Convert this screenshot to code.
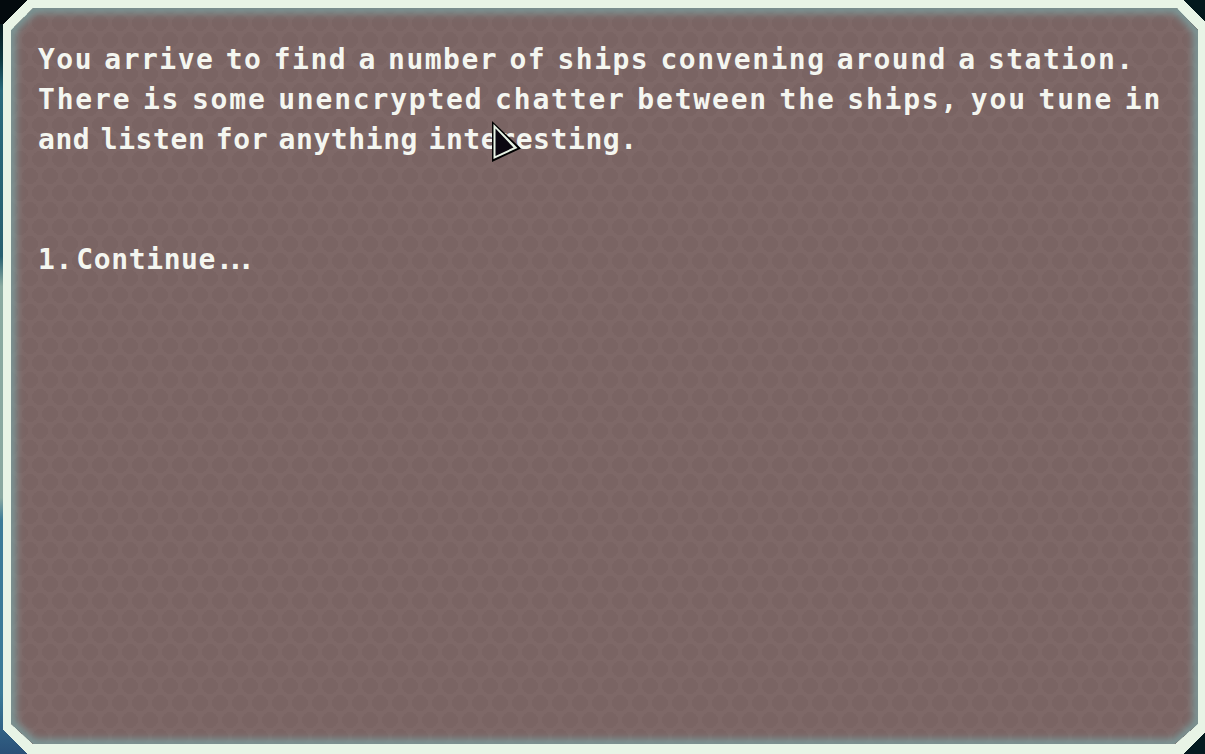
const LINES = [
  { text: 'You arrive to find a number of ships convening around a station.', tracking: 'tracking-[1.48px]' },
  { text: 'There is some unencrypted chatter between the ships, you tune in', tracking: 'tracking-[1.8px]' },
  { text: 'and listen for anything interesting.', tracking: 'tracking-[0.58px]' },
];

function PanelArt() {
  return (
    <svg className="absolute inset-0" width="1205" height="754" viewBox="0 0 1205 754" shapeRendering="crispEdges">
      <defs>
        <pattern id="hex" width="20" height="34" patternUnits="userSpaceOnUse" y="-2">
          <circle cx="10" cy="8" r="8" fill="#7a6463" />
          <circle cx="0" cy="25" r="8" fill="#7a6463" />
          <circle cx="20" cy="25" r="8" fill="#7a6463" />
        </pattern>
        <filter id="glow" x="-5%" y="-5%" width="110%" height="110%">
          <feGaussianBlur stdDeviation="4" />
        </filter>
        <clipPath id="inner">
          <polygon points="33,8 1177,8 1198,30 1198,724 1175,744 33,744 11,724 11,30" />
        </clipPath>
        <linearGradient id="side" x1="0" y1="0" x2="0" y2="1">
          <stop offset="0" stopColor="#020608" />
          <stop offset="0.08" stopColor="#0e3a40" />
          <stop offset="0.12" stopColor="#2a6a7c" />
          <stop offset="0.34" stopColor="#27606f" />
          <stop offset="0.38" stopColor="#8aaaa0" />
          <stop offset="0.66" stopColor="#8aa8a0" />
          <stop offset="0.69" stopColor="#3b7b97" />
          <stop offset="0.92" stopColor="#3b7b97" />
          <stop offset="1" stopColor="#2a5078" />
        </linearGradient>
      </defs>
      <rect x="0" y="0" width="30" height="754" fill="url(#side)" />
      <polygon points="0,0 27,0 3,24 0,24" fill="#030a0d" />
      <polygon points="1183,0 1205,0 1205,22" fill="#03181c" />
      <polygon points="1205,732 1205,754 1183,754" fill="#041a20" />
      <polygon points="3,24 27,0 1183,0 1205,22 1205,732 1183,754 27,754 3,730" fill="#e8f4e6" />
      <polygon points="33,8 1177,8 1198,30 1198,724 1175,744 33,744 11,724 11,30" fill="#7e6867" />
      <g clipPath="url(#inner)">
        <rect x="11" y="8" width="1187" height="736" fill="url(#hex)" />
        <polygon
          points="33,8 1177,8 1198,30 1198,724 1175,744 33,744 11,724 11,30"
          fill="none"
          stroke="#7aa5a5"
          strokeWidth="8"
          filter="url(#glow)"
          shapeRendering="auto"
        />
      </g>
    </svg>
  );
}

function Cursor() {
  return (
    <svg className="absolute left-[490px] top-[119px]" width="32" height="44" viewBox="0 0 32 44">
      <polygon points="2,2 31,29.5 2,43" fill="#000" />
      <polygon points="3.5,5 27.5,29 3.5,40" fill="#e8f4e6" />
      <polygon points="5.5,9.5 23.5,28.5 5.5,37" fill="#0b0710" />
    </svg>
  );
}

export default function App() {
  return (
    <div className="relative h-[754px] w-[1205px] overflow-hidden bg-[#06181c]">
      <PanelArt />
      <div className="relative pl-[38px] pt-[40px] font-['DejaVu_Sans_Mono',monospace] text-[28px] font-bold leading-[40px] text-[#f4f6f0] [word-spacing:-7px]">
        {LINES.map(line => (
          <div key={line.text} className={`whitespace-nowrap ${line.tracking}`}>{line.text}</div>
        ))}
        <div className="mt-[80px] whitespace-nowrap tracking-[0.6px] [word-spacing:-14px]">
          1. Continue<span className="tracking-[-6px]">...</span>
        </div>
      </div>
      <Cursor />
    </div>
  );
}
